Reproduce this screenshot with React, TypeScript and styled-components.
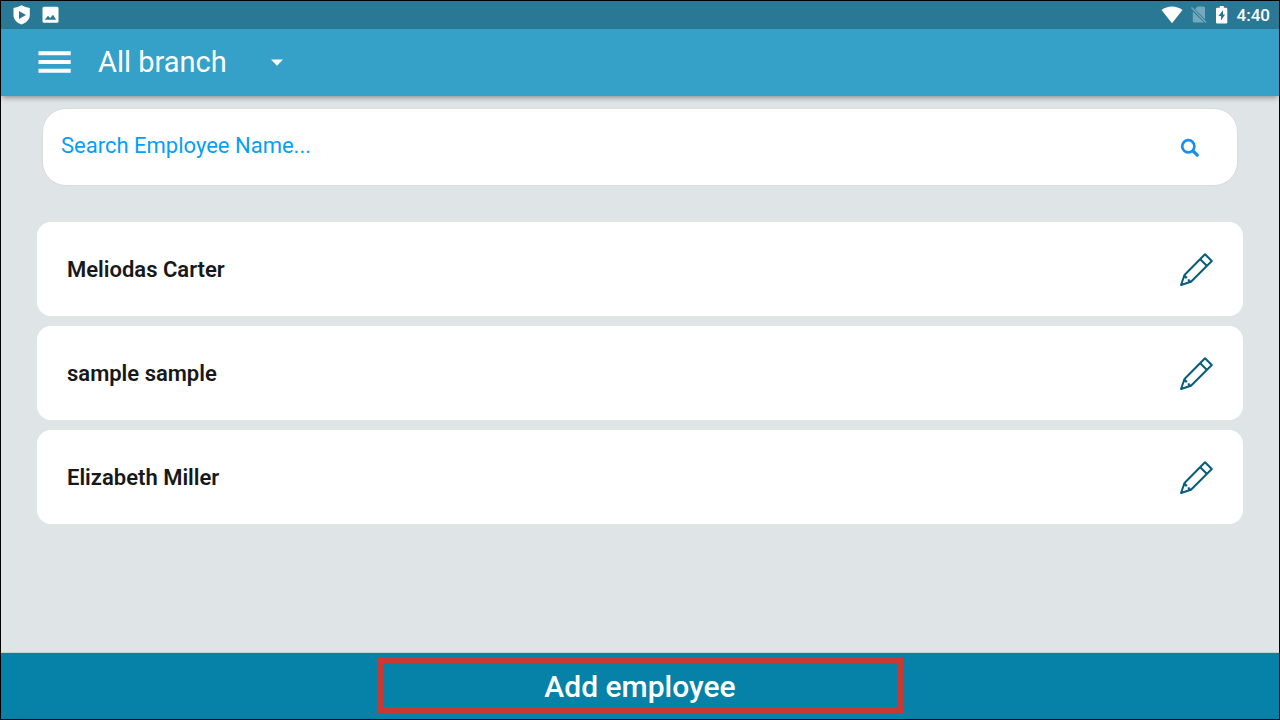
import React from "react";
import styled, { createGlobalStyle } from "styled-components";

const GlobalStyle = createGlobalStyle`
  * { box-sizing: border-box; }
  body { margin: 0; font-family: Roboto, "Liberation Sans", sans-serif; }
  button, input, select { font-family: inherit; }
`;

const Screen = styled.div`
  display: flex;
  flex-direction: column;
  min-height: 100vh;
  border: 1px solid #000;
  background: #dfe4e7;
`;

const StatusBar = styled.div`
  display: flex;
  align-items: center;
  justify-content: space-between;
  height: 28px;
  padding: 0 9px 0 12px;
  background: #297996;
  color: #fff;
`;

const StatusGroup = styled.div<{ $gap: number }>`
  display: flex;
  align-items: center;
  gap: ${(p) => p.$gap}px;
`;

const Clock = styled.time`
  font-size: 17px;
  line-height: 20px;
  font-weight: 500;
`;

const Header = styled.header`
  display: flex;
  align-items: center;
  gap: 27px;
  height: 67px;
  padding: 0 37px 2px;
  background: #35a1c8;
  box-shadow: 0 3px 5px -1px rgba(0, 0, 0, 0.35);
`;

const MenuButton = styled.button`
  display: flex;
  padding: 0;
  border: 0;
  background: none;
  color: #fff;
  cursor: pointer;
`;

const BranchPicker = styled.label`
  display: grid;
  align-items: center;
  width: 186px;
  color: #fff;

  > * { grid-area: 1 / 1; }
  > svg { justify-self: end; pointer-events: none; }
`;

const BranchSelect = styled.select`
  appearance: none;
  width: 100%;
  padding: 0;
  border: 0;
  background: none;
  color: inherit;
  font-size: 29px;
  line-height: 36px;
`;

const Content = styled.main`
  flex: 1;
  padding: 12px 36px;
`;

const SearchBox = styled.label`
  display: flex;
  align-items: center;
  height: 78px;
  margin: 0 5px 36px;
  padding: 2px 37px 0 18px;
  border: 1px solid #dadcdd;
  border-radius: 24px;
  background: #fff;
  color: #1590f0;
`;

const SearchInput = styled.input`
  flex: 1;
  min-width: 0;
  padding: 0 0 4px;
  border: 0;
  outline: 0;
  background: none;
  color: #05a0f5;
  font-size: 22px;
  line-height: 28px;

  &::placeholder { color: #05a0f5; opacity: 1; }
`;

const EmployeeList = styled.ul`
  display: flex;
  flex-direction: column;
  gap: 10px;
  margin: 0;
  padding: 0;
  list-style: none;
`;

const EmployeeCard = styled.li`
  display: flex;
  align-items: center;
  justify-content: space-between;
  height: 94px;
  padding: 2px 29px 0 30px;
  border-radius: 14px;
  background: #fff;
`;

const EmployeeName = styled.span`
  color: #17181a;
  font-size: 22px;
  line-height: 28px;
  font-weight: 600;
`;

const EditButton = styled.button`
  display: flex;
  padding: 0;
  border: 0;
  background: none;
  color: #075e7a;
  cursor: pointer;
`;

const Footer = styled.footer`
  display: flex;
  justify-content: center;
  padding: 4px 0 6px;
  border-top: 1px solid #c3d0d4;
  background: #0682a8;
`;

const AddButton = styled.button`
  width: 526px;
  max-width: 100%;
  height: 56px;
  padding: 3px 0 0;
  border: 6px solid #c93835;
  background: none;
  color: #fff;
  font-size: 30px;
  line-height: 36px;
  font-weight: 500;
  cursor: pointer;
`;

const ShieldIcon = () => (
  <svg width="18" height="20" viewBox="0 0 18 20" aria-hidden="true">
    <path
      fill="currentColor"
      fillRule="evenodd"
      d="M8.500 0.300Q12.300 2.300 16.800 3V10C16.800 14.500 13.300 17.800 8.500 19.500 3.800 17.800 0.500 14.500 0.500 10V3Q4.800 2.300 8.500 0.300ZM6 6v8L13 10Z"
    />
  </svg>
);

const PictureIcon = () => (
  <svg width="18" height="18" viewBox="0 0 18 18" aria-hidden="true">
    <path
      fill="currentColor"
      fillRule="evenodd"
      d="M2 0.800h13A1.500 1.500 0 0 1 16.500 2.300v13a1.500 1.500 0 0 1-1.500 1.500h-13A1.500 1.500 0 0 1 0.500 15.300v-13A1.500 1.500 0 0 1 2 0.800ZM2.700 13.800h11.500L11 8.800 8.200 12.100 6 9.800Z"
    />
  </svg>
);

const WifiIcon = () => (
  <svg width="22" height="18" viewBox="0 0 22 18" aria-hidden="true">
    <path fill="currentColor" d="M11 17.300 0.500 4C3.500 1.700 7 0.500 11 0.500S18.500 1.700 21.500 4Z" />
  </svg>
);

const NoSimIcon = () => (
  <svg width="16" height="18" viewBox="0 0 16 18" aria-hidden="true" opacity="0.35">
    <path
      fill="currentColor"
      d="M6.500 0.500H12.500a1.500 1.500 0 0 1 1.500 1.500v11.200L4 3.200ZM1.800 5.500 13 16.500H3.300a1.500 1.500 0 0 1-1.500-1.500Z"
    />
    <path stroke="currentColor" strokeWidth="1.500" d="M0.500 1.500 15 16.500" />
  </svg>
);

const BatteryIcon = () => (
  <svg width="12" height="18" viewBox="0 0 12 18" aria-hidden="true">
    <path
      fill="currentColor"
      fillRule="evenodd"
      d="M3.800 0H7.800V1.700h2.300A1.200 1.200 0 0 1 11.300 2.900V16.300a1.200 1.200 0 0 1-1.200 1.200H1.200A1.200 1.200 0 0 1 0 16.300V2.900A1.200 1.200 0 0 1 1.200 1.700H3.800ZM7 4.300 2.300 10.100H5V14.600L9.100 8.600H7Z"
    />
  </svg>
);

const MenuIcon = () => (
  <svg width="33" height="24" viewBox="0 0 33 24" aria-hidden="true">
    <path stroke="currentColor" strokeWidth="4" d="M0.500 3.300H32.700M0.500 12H32.700M0.500 20.700H32.700" />
  </svg>
);

const CaretIcon = () => (
  <svg width="14" height="8" viewBox="0 0 14 8" aria-hidden="true">
    <path fill="currentColor" d="M1 1.500H13L7 7.800Z" />
  </svg>
);

const SearchIcon = () => (
  <svg width="20" height="20" viewBox="0 0 20 20" fill="none" stroke="currentColor" aria-hidden="true">
    <circle cx="8.300" cy="8.300" r="6.100" strokeWidth="2.700" />
    <path strokeWidth="3.200" strokeLinecap="round" d="M13 13 17.300 17.200" />
  </svg>
);

const PencilIcon = () => (
  <svg
    width="34"
    height="34"
    viewBox="0 0 34 34"
    fill="none"
    stroke="currentColor"
    strokeWidth="2"
    strokeLinejoin="round"
    aria-hidden="true"
  >
    <path d="M1 32 4.500 22 25 1.200 31.800 8 11 28.800Z" />
    <path d="M20.200 6.200 27 13M4.500 22 5.300 24.500 7.300 24.200M8.700 26.200 8.800 28 11 28.800" />
  </svg>
);

const employees = ["Meliodas Carter", "sample sample", "Elizabeth Miller"];

export default function App() {
  return (
    <>
      <GlobalStyle />
      <Screen>
        <StatusBar>
          <StatusGroup $gap={11}>
            <ShieldIcon />
            <PictureIcon />
          </StatusGroup>
          <StatusGroup $gap={9}>
            <StatusGroup $gap={8}>
              <WifiIcon />
              <NoSimIcon />
            </StatusGroup>
            <BatteryIcon />
            <Clock>4:40</Clock>
          </StatusGroup>
        </StatusBar>
        <Header>
          <MenuButton aria-label="Menu">
            <MenuIcon />
          </MenuButton>
          <BranchPicker>
            <BranchSelect aria-label="Branch">
              <option>All branch</option>
            </BranchSelect>
            <CaretIcon />
          </BranchPicker>
        </Header>
        <Content>
          <SearchBox>
            <SearchInput type="text" placeholder="Search Employee Name..." aria-label="Search employee name" />
            <SearchIcon />
          </SearchBox>
          <EmployeeList>
            {employees.map((name) => (
              <EmployeeCard key={name}>
                <EmployeeName>{name}</EmployeeName>
                <EditButton aria-label={`Edit ${name}`}>
                  <PencilIcon />
                </EditButton>
              </EmployeeCard>
            ))}
          </EmployeeList>
        </Content>
        <Footer>
          <AddButton>Add employee</AddButton>
        </Footer>
      </Screen>
    </>
  );
}
